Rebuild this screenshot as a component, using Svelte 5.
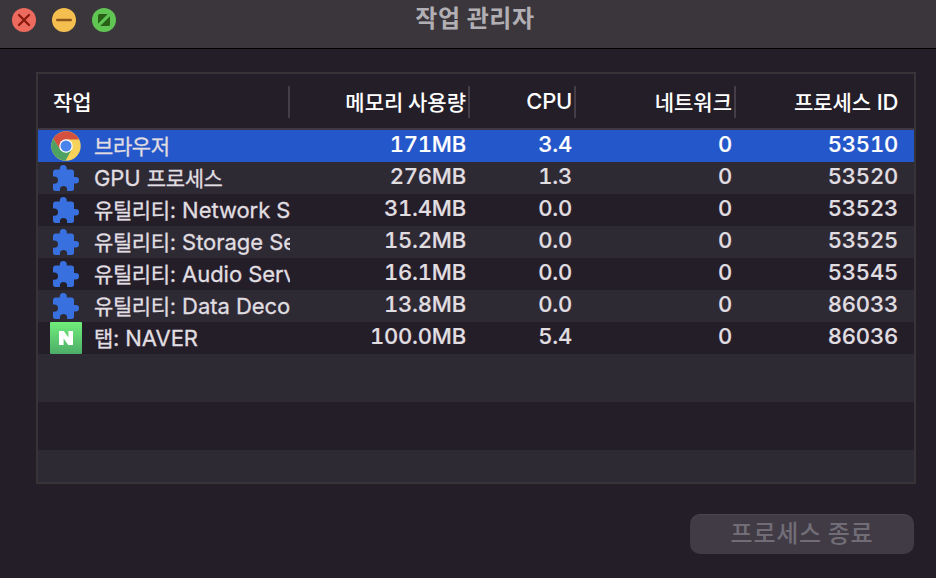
<script>
  const rows = [
    { icon: 'chrome', name: [['ko', '브라우저']], mem: '171MB', cpu: '3.4', net: '0', pid: '53510' },
    { icon: 'puzzle', name: [['en', 'GPU '], ['ko', '프로세스']], mem: '276MB', cpu: '1.3', net: '0', pid: '53520' },
    { icon: 'puzzle', name: [['ko', '유틸리티'], ['en', ': Network S']], mem: '31.4MB', cpu: '0.0', net: '0', pid: '53523' },
    { icon: 'puzzle', name: [['ko', '유틸리티'], ['en', ': Storage Se']], mem: '15.2MB', cpu: '0.0', net: '0', pid: '53525' },
    { icon: 'puzzle', name: [['ko', '유틸리티'], ['en', ': Audio Serv']], mem: '16.1MB', cpu: '0.0', net: '0', pid: '53545' },
    { icon: 'puzzle', name: [['ko', '유틸리티'], ['en', ': Data Deco']], mem: '13.8MB', cpu: '0.0', net: '0', pid: '86033' },
    { icon: 'naver', name: [['ko', '탭'], ['en', ': NAVER']], mem: '100.0MB', cpu: '5.4', net: '0', pid: '86036' }
  ];
</script>

<div class="window">
  <header class="titlebar">
    <div class="lights">
      <svg width="24" height="24" viewBox="0 0 24 24"><circle cx="12" cy="12" r="12" fill="#ed6a5e" /><path d="M7 7l10 10M17 7L7 17" stroke="#8c1a10" stroke-width="2.4" stroke-linecap="round" /></svg>
      <svg width="24" height="24" viewBox="0 0 24 24"><circle cx="12" cy="12" r="12" fill="#f5bf4f" /><path d="M5.3 12h13.4" stroke="#8f591d" stroke-width="2.6" stroke-linecap="round" /></svg>
      <svg width="24" height="24" viewBox="0 0 24 24"><circle cx="12" cy="12" r="12" fill="#61c554" /><path d="M6 15.8V7.5Q6 6 7.5 6h8.3zM18 8.2v8.3q0 1.5-1.5 1.5H8.2z" fill="#286017" /></svg>
    </div>
    <h1>작업 관리자</h1>
  </header>

  <main>
    <div class="table">
      <div class="head">
        <div class="name ko">작업</div>
        <div class="mem ko">메모리 사용량</div>
        <div class="cpu en">CPU</div>
        <div class="net ko">네트워크</div>
        <div class="pid"><span class="ko">프로세스</span><span class="en">&nbsp;ID</span></div>
      </div>
      {#each rows as row, i}
        <div class="row" class:selected={i === 0}>
          <div class="name">
            <span class="icon">
              {#if row.icon === 'chrome'}
                <svg width="32" height="32" viewBox="0 0 32 32">
                  <circle cx="16" cy="16" r="14.7" fill="#f8d35b" />
                  <path d="M3.27 8.65A14.7 14.7 0 0 1 28.73 8.65L28.9 9.6H16L9.7 19.6z" fill="#d4513f" />
                  <path d="M3.27 8.65A14.7 14.7 0 0 0 15.4 30.7L21.8 19.5 16 22.4 10.3 19.7z" fill="#4da263" />
                  <circle cx="16" cy="16" r="6.8" fill="#fff" />
                  <circle cx="16" cy="16" r="5.5" fill="#4b83ed" />
                </svg>
              {:else if row.icon === 'puzzle'}
                <svg width="32" height="32" viewBox="0 0 32 32">
                  <path d="M5.3 7.5H9.8V6.4a3.5 3.5 0 0 1 7 0V7.5H21.5Q24 7.5 24 10V15H25.7a3.3 3.3 0 0 1 0 6.6H24V26.5Q24 29 21.5 29H17.1V27.6a3.6 3.6 0 0 0-7.2 0V29H5.3Q3 29 3 26.5V21.8H4.4a3.6 3.6 0 0 0 0-7.2H3V10Q3 7.5 5.3 7.5z" fill="#3871df" />
                </svg>
              {:else}
                <svg width="32" height="32" viewBox="0 0 32 32">
                  <defs><linearGradient id="naver" x2="0" y2="1"><stop stop-color="#70ee7a" /><stop offset="1" stop-color="#4dad68" /></linearGradient></defs>
                  <rect width="32" height="32" rx="1" fill="url(#naver)" />
                  <path d="M9 9h4.8l4.6 6.6V9H23v14h-4.8l-4.6-6.6V23H9z" fill="#fff" />
                </svg>
              {/if}
            </span>
            <span class="label">{#each row.name as [lang, text]}<span class={lang}>{text}</span>{/each}</span>
          </div>
          <div class="mem num">{row.mem}</div>
          <div class="cpu num">{row.cpu}</div>
          <div class="net num">{row.net}</div>
          <div class="pid num">{row.pid}</div>
        </div>
      {/each}
      <div class="filler light"></div>
      <div class="filler"></div>
      <div class="filler light last"></div>
    </div>
    <button disabled>프로세스 종료</button>
  </main>
</div>

<style>
  :global(body) { margin: 0; background: #241e29; }
  .window {
    width: 936px;
    height: 578px;
    overflow: hidden;
    background: #241e29;
    color: #e0dee1;
    font-family: Inter, "Noto Sans CJK KR", sans-serif;
  }
  .titlebar {
    box-sizing: border-box;
    height: 49px;
    background: #3a363c;
    border-bottom: 1px solid #000;
    display: grid;
    grid-template-columns: 1fr auto 1fr;
    align-items: start;
  }
  .lights { display: flex; gap: 16px; padding: 8px 0 0 12px; }
  h1 {
    margin: 0;
    padding-left: 14px;
    font: 700 24px/34px "Noto Sans CJK KR", sans-serif;
    letter-spacing: 0.6px;
    color: #b2afb4;
    white-space: nowrap;
  }
  main { padding: 23px 20px 0 36px; display: flex; flex-direction: column; }
  .table { box-sizing: border-box; height: 412px; border: 2px solid #363436; }
  .head, .row { display: grid; grid-template-columns: 252px 180px 106px 160px 178px; }
  .head {
    box-sizing: border-box;
    height: 56px;
    padding-top: 12px;
    border-bottom: 2px solid #3e3842;
    align-items: start;
    color: #fff;
    font-weight: 500;
  }
  .head > div {
    box-sizing: border-box;
    height: 32px;
    line-height: 30px;
    border-right: 2px solid #443e49;
    text-align: right;
    padding-right: 2px;
    white-space: nowrap;
  }
  .head > .name { text-align: left; padding-left: 15px; }
  .head > .pid { border-right: 0; padding-right: 16px; }
  .ko { font-family: "Noto Sans CJK KR", sans-serif; font-size: 21px; }
  .en { font-family: Inter, sans-serif; font-size: 22px; }
  .head .en { letter-spacing: -0.3px; }
  .row { height: 32px; }
  .row:nth-child(odd), .light { background: #2d2a34; }
  .row.selected { background: #2457ca; color: #fff; }
  .row > .name { display: flex; padding-left: 12px; overflow: hidden; color: #e0dee1; }
  .icon { flex: none; width: 32px; height: 32px; }
  .icon svg { display: block; }
  .label { flex: 1; margin-left: 12px; overflow: hidden; white-space: pre; line-height: 30px; }
  .label .ko { letter-spacing: -0.4px; -webkit-text-stroke: 0.3px currentColor; }
  .label .en { letter-spacing: -0.05px; -webkit-text-stroke: 0.3px currentColor; }
  .num {
    text-align: right;
    font-size: 22px;
    font-weight: 450;
    letter-spacing: -0.2px;
    line-height: 29px;
    font-feature-settings: "tnum";
    -webkit-text-stroke: 0.2px currentColor;
    padding-right: 4px;
  }
  .row > .pid { padding-right: 16px; }
  .filler { height: 48px; }
  .filler.last { height: 32px; }
  button {
    width: 224px;
    height: 40px;
    margin: 30px 2px 0 0;
    align-self: flex-end;
    padding: 0 0 6px;
    border: 0;
    border-top: 1px solid #4b4550;
    border-radius: 10px;
    background: #413b45;
    color: #716d77;
    font: 500 24px/32px "Noto Sans CJK KR", sans-serif;
    letter-spacing: 0.7px;
  }
</style>
